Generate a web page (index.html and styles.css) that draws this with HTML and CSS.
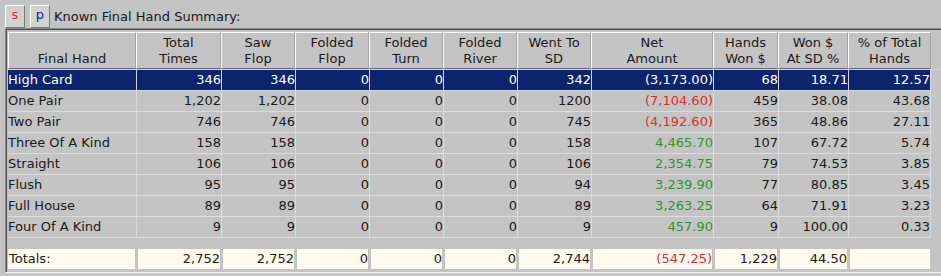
FILE: index.html
```html
<!DOCTYPE html>
<html>
<head>
<meta charset="utf-8">
<link rel="stylesheet" href="styles.css">
</head>
<body>
<div class="toolbar">
  <button class="btn btn-s">s</button>
  <button class="btn btn-p">p</button>
  <span class="title">Known Final Hand Summary:</span>
</div>
<div class="grid">
  <div class="row head">
    <div class="h">Final Hand</div>
    <div class="h">Total<br>Times</div>
    <div class="h">Saw<br>Flop</div>
    <div class="h">Folded<br>Flop</div>
    <div class="h">Folded<br>Turn</div>
    <div class="h">Folded<br>River</div>
    <div class="h">Went To<br>SD</div>
    <div class="h">Net<br>Amount</div>
    <div class="h">Hands<br>Won $</div>
    <div class="h">Won $<br>At SD %</div>
    <div class="h">% of Total<br>Hands</div>
  </div>
  <div class="row data sel">
    <div class="c l">High Card</div><div class="c">346</div><div class="c">346</div><div class="c">0</div><div class="c">0</div><div class="c">0</div><div class="c">342</div><div class="c">(3,173.00)</div><div class="c">68</div><div class="c">18.71</div><div class="c">12.57</div>
  </div>
  <div class="row data">
    <div class="c l">One Pair</div><div class="c">1,202</div><div class="c">1,202</div><div class="c">0</div><div class="c">0</div><div class="c">0</div><div class="c">1200</div><div class="c neg">(7,104.60)</div><div class="c">459</div><div class="c">38.08</div><div class="c">43.68</div>
  </div>
  <div class="row data">
    <div class="c l">Two Pair</div><div class="c">746</div><div class="c">746</div><div class="c">0</div><div class="c">0</div><div class="c">0</div><div class="c">745</div><div class="c neg">(4,192.60)</div><div class="c">365</div><div class="c">48.86</div><div class="c">27.11</div>
  </div>
  <div class="row data">
    <div class="c l">Three Of A Kind</div><div class="c">158</div><div class="c">158</div><div class="c">0</div><div class="c">0</div><div class="c">0</div><div class="c">158</div><div class="c pos">4,465.70</div><div class="c">107</div><div class="c">67.72</div><div class="c">5.74</div>
  </div>
  <div class="row data">
    <div class="c l">Straight</div><div class="c">106</div><div class="c">106</div><div class="c">0</div><div class="c">0</div><div class="c">0</div><div class="c">106</div><div class="c pos">2,354.75</div><div class="c">79</div><div class="c">74.53</div><div class="c">3.85</div>
  </div>
  <div class="row data">
    <div class="c l">Flush</div><div class="c">95</div><div class="c">95</div><div class="c">0</div><div class="c">0</div><div class="c">0</div><div class="c">94</div><div class="c pos">3,239.90</div><div class="c">77</div><div class="c">80.85</div><div class="c">3.45</div>
  </div>
  <div class="row data">
    <div class="c l">Full House</div><div class="c">89</div><div class="c">89</div><div class="c">0</div><div class="c">0</div><div class="c">0</div><div class="c">89</div><div class="c pos">3,263.25</div><div class="c">64</div><div class="c">71.91</div><div class="c">3.23</div>
  </div>
  <div class="row data">
    <div class="c l">Four Of A Kind</div><div class="c">9</div><div class="c">9</div><div class="c">0</div><div class="c">0</div><div class="c">0</div><div class="c">9</div><div class="c pos">457.90</div><div class="c">9</div><div class="c">100.00</div><div class="c">0.33</div>
  </div>
  <div class="row totals">
    <div class="t l">Totals:</div><div class="t">2,752</div><div class="t">2,752</div><div class="t">0</div><div class="t">0</div><div class="t">0</div><div class="t">2,744</div><div class="t neg">(547.25)</div><div class="t">1,229</div><div class="t">44.50</div><div class="t"></div>
  </div>
</div>
</body>
</html>
```

FILE: styles.css
```css
html, body {
  margin: 0;
  padding: 0;
  overflow: hidden;
}
body {
  background: #c4c4c4;
  font-family: "DejaVu Sans", Verdana, sans-serif;
  font-size: 13px;
  color: #1a1a1a;
  width: 941px;
  height: 276px;
}
.toolbar {
  display: flex;
  align-items: center;
  height: 24px;
  padding: 4px 0 0 5px;
}
.btn {
  box-sizing: border-box;
  width: 20px;
  height: 23px;
  margin: 0 5px 0 0;
  padding: 0 0 2px 0;
  background: #d2d2d2;
  border: 1px solid;
  border-color: #ffffff #7a7a7a #7a7a7a #ffffff;
  font-family: "DejaVu Sans", Verdana, sans-serif;
  font-size: 13px;
  line-height: 18px;
}
.btn-s { color: #e02a2a; }
.btn-p { color: #1a1a80; }
.title {
  margin-left: -1px;
  color: #1a1a1a;
}
.grid {
  width: 960px;
  margin-left: 5px;
  border-top: 1px solid #8a8a8a;
  border-left: 1px solid #8a8a8a;
  border-bottom: 1px solid #f4f4f4;
  box-shadow: inset 1px 1px 0 #4a4a4a;
  padding: 3px 0 3px 2px;
  box-sizing: border-box;
}
.row {
  display: grid;
  grid-template-columns: 128px 85px 74px 74px 74px 74px 74px 122px 65px 70px 83px;
}
.head {
  height: 37px;
  border-bottom: 1px solid #d6d6d6;
}
.h {
  box-sizing: border-box;
  border-top: 1px solid #ffffff;
  border-left: 1px solid #ffffff;
  border-right: 1px solid #a4a4a4;
  border-bottom: 1px solid #6a6a6a;
  display: flex;
  align-items: flex-end;
  justify-content: center;
  text-align: center;
  line-height: 16px;
  padding-bottom: 1px;
}
.data {
  height: 21px;
}
.c {
  box-sizing: border-box;
  border-left: 1px solid #dcdcdc;
  border-bottom: 1px solid #dcdcdc;
  text-align: right;
  line-height: 20px;
  white-space: nowrap;
  padding-right: 0;
}
.c:first-child { border-left: none; }
.c:last-child { border-right: 1px solid #dcdcdc; }
.l {
  text-align: left;
  padding-left: 0;
}
.sel .c {
  background: #0b246b;
  color: #ffffff;
  border-left-color: #cfd3dc;
  border-bottom-color: #cfd3dc;
}
.sel .c:first-child { border-left: none; }
.neg { color: #e02c2c; }
.pos { color: #2f962f; }
.totals {
  margin-top: 11px;
  height: 20px;
}
.t {
  box-sizing: border-box;
  background: #fffbf0;
  border-left: 2px solid #c4c4c4;
  border-right: 1px solid #c4c4c4;
  text-align: right;
  line-height: 20px;
  white-space: nowrap;
}
.t:first-child { border-left: none; }
.t.l { text-align: left; padding-left: 1px; }
```
